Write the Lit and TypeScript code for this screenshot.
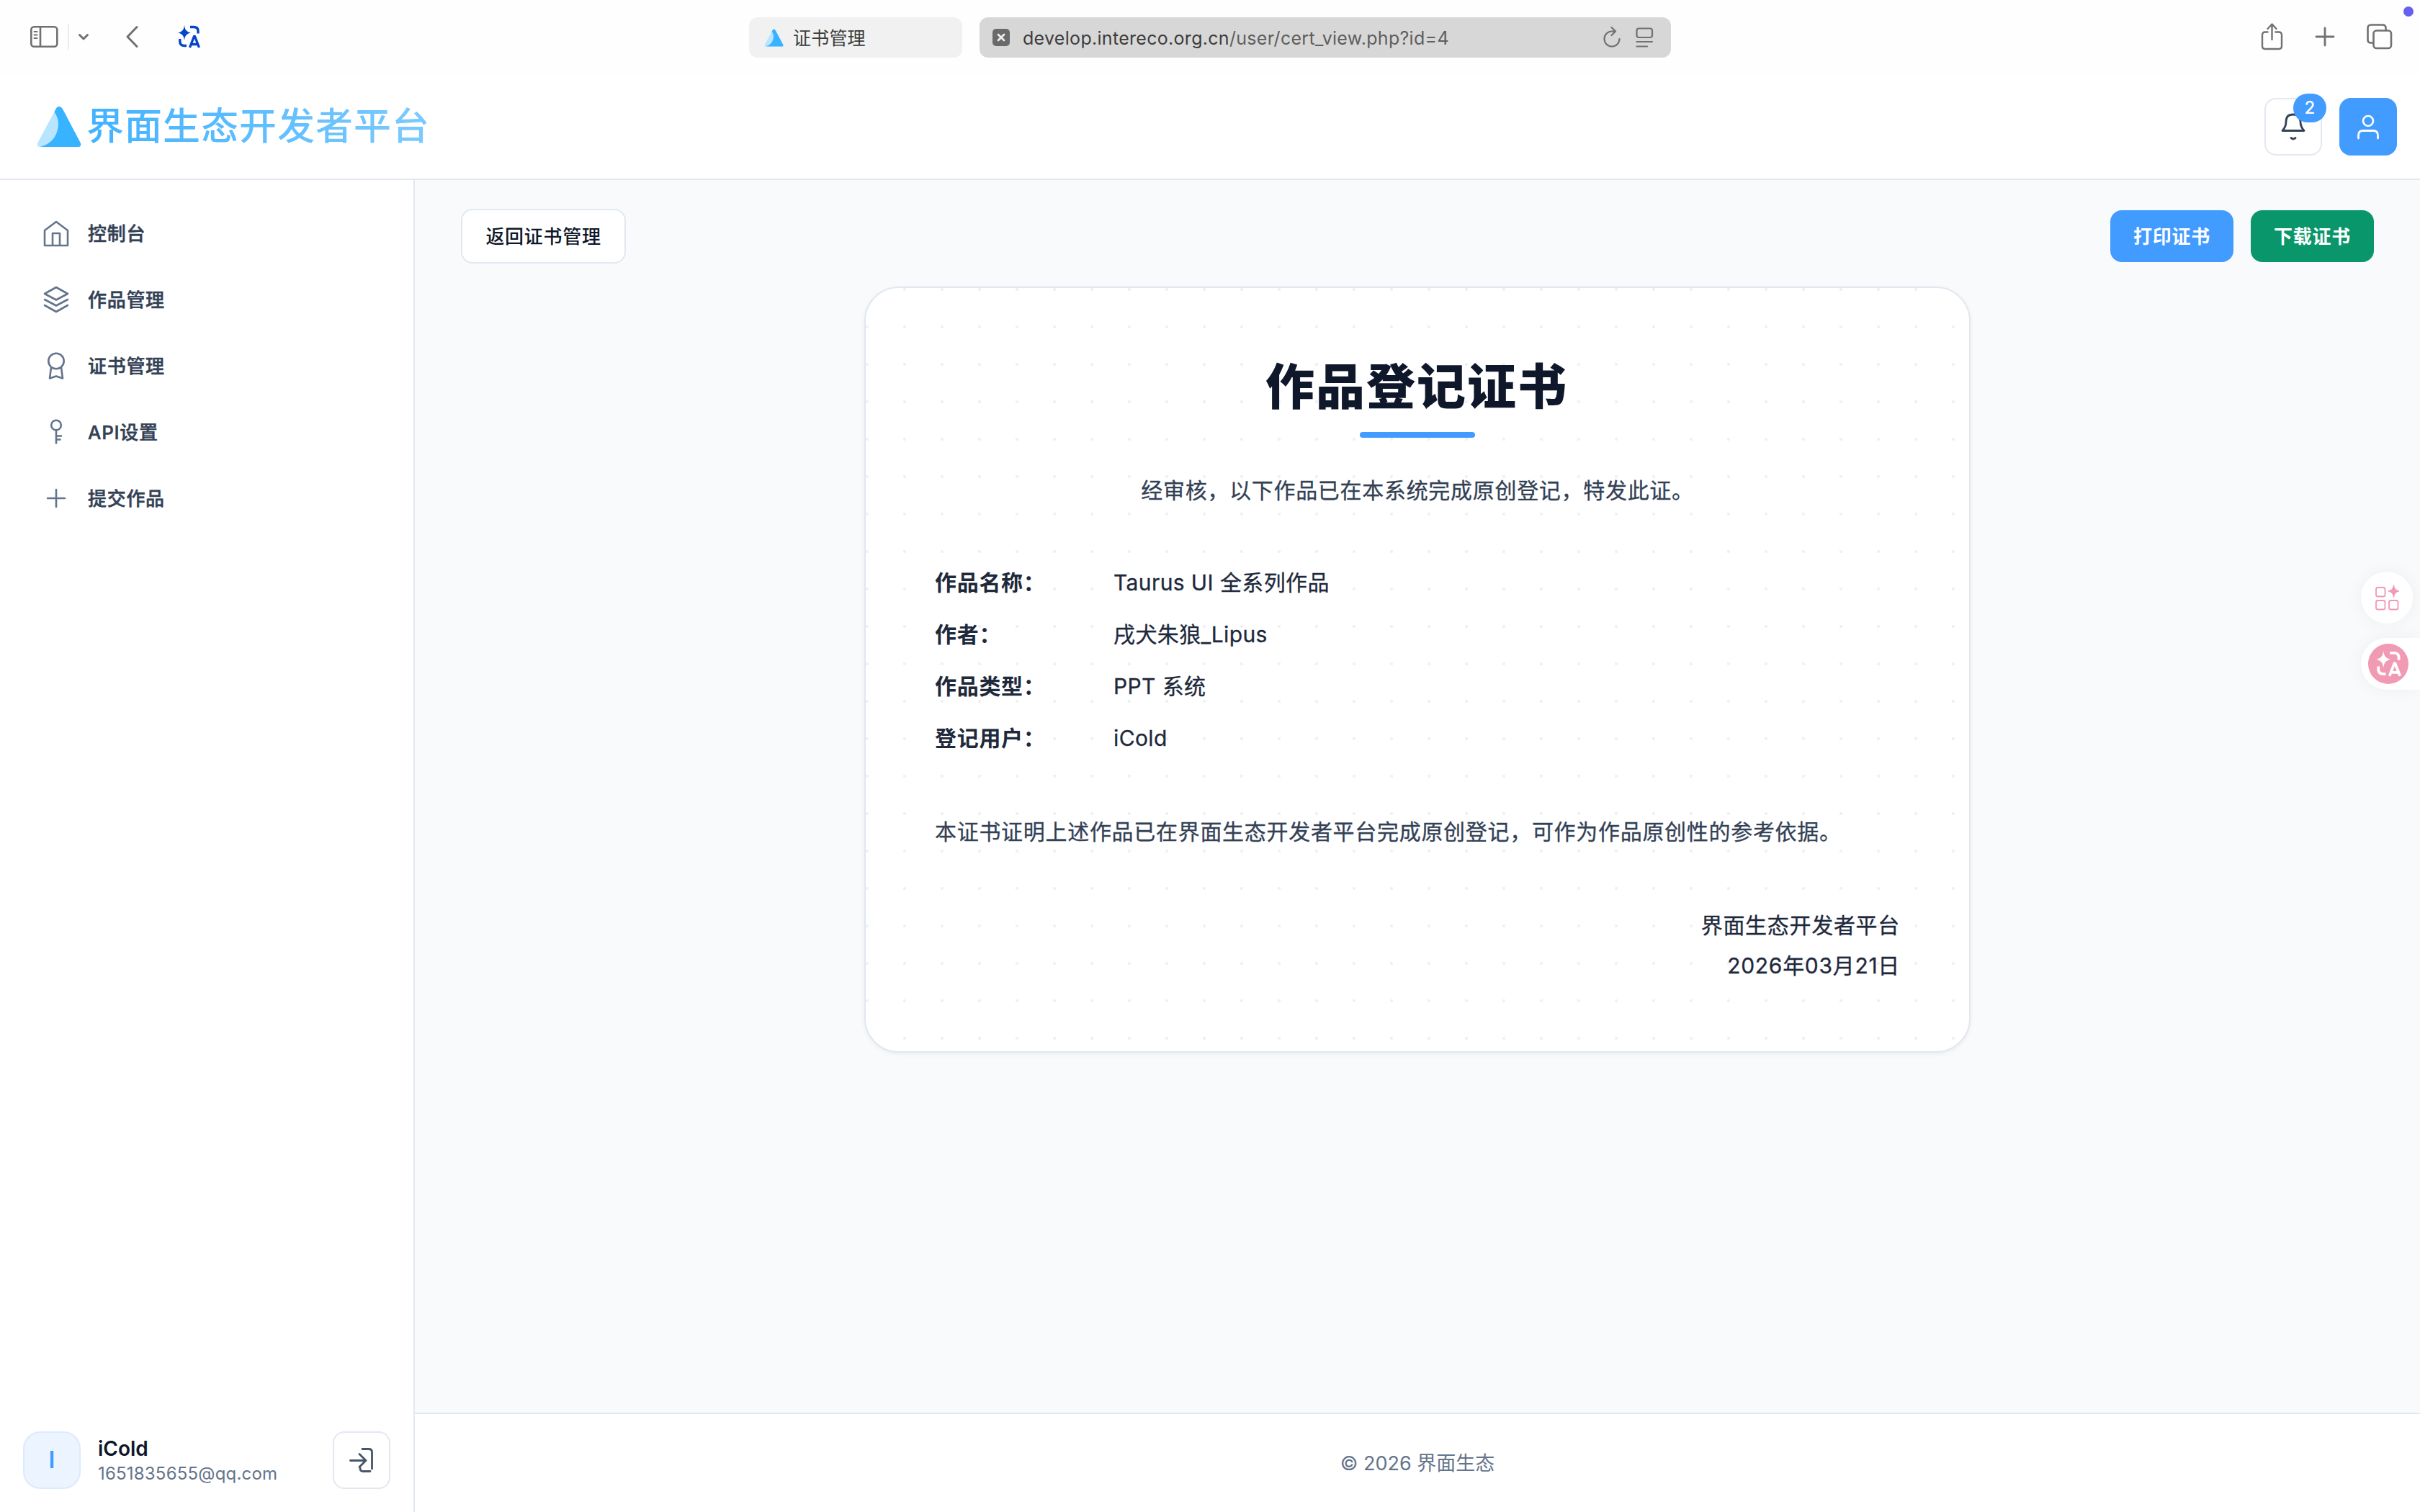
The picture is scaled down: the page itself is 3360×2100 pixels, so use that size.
import { LitElement, html, css, svg } from "lit";
import { customElement } from "lit/decorators.js";

const icon = (cls: string, w: number, h: number, body: unknown) =>
  html`<svg class=${cls} width=${w} height=${h} viewBox="0 0 ${w} ${h}" fill="none" stroke="currentColor" stroke-width="2.6" stroke-linecap="round" stroke-linejoin="round">${body}</svg>`;

const translateGlyph = svg`
  <path d="M9 0 C10 7 12 9 18 10.5 C12 12 10 14 9 21 C8 14 6 12 0 10.5 C6 9 8 7 9 0Z" fill="currentColor" stroke="none"/>
  <path d="M17 2.5 H22 Q28 2.5 28 8 V11.500" stroke-width="3.4" stroke-linecap="butt"/>
  <path d="M2.800 19 V22.500 Q2.800 28.500 9 28.500 H12" stroke-width="3.4" stroke-linecap="butt"/>
  <path d="M16.500 31 L22.500 15.500 H23.500 L29.500 31 M18.500 26.500 H27.500" stroke-width="3.4" stroke-linecap="butt"/>`;

const mark = (w: number, h: number) => html`<svg class="mark" width=${w} height=${h} viewBox="0 0 62 58">
  <path d="M31 1 Q28 1 26.500 4.500 L1.500 51 Q-1 57 5 57 H57 Q63 57 60.500 51 L36 4.500 Q34 1 31 1Z" fill="#b8e5ff"/>
  <path d="M31 1 Q28 1 26.500 4.500 L24.500 8.500 Q31 18 30 28 Q27 51 5 57 H57 Q63 57 60.500 51 L36 4.500 Q34 1 31 1Z" fill="#38b3ff"/>
</svg>`;

const navItems = [
  { label: "控制台", art: svg`<path d="M2 15 L18 3 L34 15 V36 H2Z M13 36 V19 H23 V36"/>` },
  { label: "作品管理", art: svg`<path d="M18 2 L34 11 L18 19.500 L2 11Z M2 19 L18 27.500 L34 19 M2 27 L18 36 L34 27"/>` },
  { label: "证书管理", art: svg`<circle cx="18" cy="12.500" r="10.700"/><path d="M11 21.500 L9 36.500 L18 33.500 L27 36.500 L25 21.500"/>` },
  { label: "API设置", art: svg`<circle cx="18" cy="9.500" r="6.800"/><path d="M18 16.500 V34.500 M18 24.500 H25 M18 29.500 H23.500"/>` },
  { label: "提交作品", art: svg`<path d="M18 7 V31 M6 19 H30"/>` },
];

const fields = [
  ["作品名称：", "Taurus UI 全系列作品"],
  ["作者：", "戌犬朱狼_Lipus"],
  ["作品类型：", "PPT 系统"],
  ["登记用户：", "iCold"],
];

@customElement("browser-bar")
export class BrowserBar extends LitElement {
  static styles = css`
    :host { display: grid; grid-template-columns: 1fr auto 1fr; align-items: center; box-sizing: border-box; height: 104px; padding: 0 37px 2px 40px; background: #fefefe; color: #717171; }
    svg { display: block; flex: none; }
    .side { display: flex; align-items: center; }
    .rule { width: 2px; height: 36px; background: #ececec; margin: 0 12px; }
    .back { margin-left: 50px; }
    .translate { color: #0645c9; margin-left: 55px; }
    .center { display: flex; gap: 24px; padding: 2px 3px 0 0; }
    .tab { display: flex; align-items: center; box-sizing: border-box; width: 296px; height: 56px; border-radius: 12px; background: #f1f1f1; color: #3c3c3c; padding-left: 20px; gap: 12px; font-size: 25px; letter-spacing: 0.2px; }
    .tab span { padding-top: 2px; }
    .url { display: flex; align-items: center; box-sizing: border-box; width: 960px; height: 56px; border-radius: 12px; background: #d7d7d7; padding: 0 24px 0 18px; }
    .site { background: #6a6a6a; border-radius: 5px; color: #ededed; }
    .address { flex: 1; margin-left: 18px; padding-top: 2px; font-size: 25px; color: #5e5e5e; letter-spacing: 0.3px; }
    .host { color: #3c3c3c; }
    .reader { margin-left: 19px; }
    .right { justify-content: flex-end; }
    .plus { margin-left: 44px; }
    .tabs { margin-left: 43px; }
  `;
  render() {
    return html`
      <div class="side">
        ${icon("panel", 42, 34, svg`<rect x="3.300" y="3.300" width="36" height="27.500" rx="4"/><path d="M16 3.500 V30.500"/><path d="M7.500 10 H11.500 M7.500 14.500 H11.500 M7.500 19 H11.500" stroke-width="2"/>`)}
        <span class="rule"></span>
        ${icon("caret", 16, 12, svg`<path d="M2.500 3.500 L8 9 L13.500 3.500" stroke-width="3"/>`)}
        ${icon("back", 18, 32, svg`<path d="M16 2.500 L3 16 L16 29.500" stroke-width="3"/>`)}
        ${icon("translate", 31, 32, translateGlyph)}
      </div>
      <div class="center">
        <div class="tab">${mark(29, 25)}<span>证书管理</span></div>
        <div class="url">
          ${icon("site", 24, 24, svg`<path d="M8 8 L16 16 M16 8 L8 16" stroke-width="2.800"/>`)}
          <span class="address"><span class="host">develop.intereco.org.cn</span>/user/cert_view.php?id=4</span>
          ${icon("reload", 26, 30, svg`<path d="M17.500 6.500 H13 A10.500 10.500 0 1 0 23.500 17 M12.500 1 L18 6.500 L12.500 12" stroke-width="2.200"/>`)}
          ${icon("reader", 26, 30, svg`<rect x="2.500" y="2.500" width="21.500" height="12.500" rx="3" stroke-width="2.200"/><path d="M2.500 21 H24 M2.500 27.500 H17" stroke-width="2.200"/>`)}
        </div>
      </div>
      <div class="side right">
        ${icon("share", 32, 40, svg`<path d="M10.500 13.500 H7 Q3 13.500 3 17.500 V33 Q3 37 7 37 H26 Q30 37 30 33 V17.500 Q30 13.500 26 13.500 H21.500 M16.500 24 V3 M10.500 9 L16.500 2.500 L22.500 9" stroke-width="2.400"/>`)}
        ${icon("plus", 28, 28, svg`<path d="M14 2 V26 M2 14 H26" stroke-width="2.800"/>`)}
        ${icon("tabs", 38, 38, svg`<rect x="10.500" y="10.500" width="24.500" height="24.500" rx="4"/><path d="M10 27.500 H7 Q2.500 27.500 2.500 23.500 V7 Q2.500 2.500 7 2.500 H23 Q27.500 2.500 27.500 7 V10"/>`)}
      </div>`;
  }
}

@customElement("site-header")
export class SiteHeader extends LitElement {
  static styles = css`
    :host { display: flex; align-items: center; justify-content: space-between; box-sizing: border-box; height: 146px; padding: 0 32px 0 50px; border-bottom: 2px solid #e2e8f0; background: #fff; }
    svg { display: block; }
    .brand { display: flex; align-items: center; gap: 6px; }
    .name { font-size: 52px; line-height: 64px; letter-spacing: 1px; font-weight: 500; background: linear-gradient(90deg, #42b2ff, #7ccafe); background-clip: text; -webkit-background-clip: text; color: transparent; }
    .actions { display: flex; gap: 24px; }
    .btn { position: relative; display: grid; place-items: center; box-sizing: border-box; width: 80px; height: 80px; border-radius: 16px; border: 2px solid #e2e8f0; color: #334155; }
    .user { background: #429bff; border-color: #429bff; color: #fff; }
    .badge { position: absolute; right: -8px; top: -8px; width: 46px; height: 40px; border-radius: 20px; background: #429bff; color: #fff; display: grid; place-items: center; font-size: 24px; font-weight: 500; }
  `;
  render() {
    return html`
      <div class="brand">${mark(64, 58)}<span class="name">界面生态开发者平台</span></div>
      <div class="actions">
        <div class="btn">
          ${icon("bell", 36, 40, svg`<path d="M3 25.500 Q8 20 8 13 Q8 3 18 3 Q28 3 28 13 Q28 20 33 25.500 Z M15 35.500 Q18 38.500 21 35.500" stroke-width="2.800"/>`)}
          <span class="badge">2</span>
        </div>
        <div class="btn user">
          ${icon("person", 36, 40, svg`<circle cx="18" cy="12" r="7"/><path d="M4.500 36 V32 Q4.500 25.500 11 25.500 H25 Q31.500 25.500 31.500 32 V36" stroke-width="2.800"/>`)}
        </div>
      </div>`;
  }
}

@customElement("side-nav")
export class SideNav extends LitElement {
  static styles = css`
    :host { display: flex; flex-direction: column; justify-content: space-between; box-sizing: border-box; width: 576px; padding: 32px; border-right: 2px solid #e2e8f0; background: #fff; }
    svg { display: block; }
    .list { display: flex; flex-direction: column; gap: 8px; }
    .item { display: flex; align-items: center; gap: 26px; height: 84px; padding-left: 28px; font-size: 26px; letter-spacing: 0.7px; font-weight: 500; color: #334155; }
    .item span { padding-top: 3px; -webkit-text-stroke: 0.5px currentColor; }
    .item svg { color: #64748b; }
    .account { display: flex; align-items: center; }
    .avatar { box-sizing: border-box; width: 80px; height: 80px; border-radius: 24px; border: 2px solid #dceafc; background: #ecf4ff; color: #429bff; display: grid; place-items: center; font-size: 32px; font-weight: 600; }
    .who { flex: 1; margin-left: 24px; padding-top: 2px; display: flex; flex-direction: column; }
    .nick { font-size: 28px; line-height: 36px; font-weight: 600; color: #0f172a; }
    .mail { font-size: 24px; line-height: 34px; letter-spacing: 0.2px; color: #64748b; }
    .exit { box-sizing: border-box; width: 80px; height: 80px; border-radius: 16px; border: 2px solid #e2e8f0; display: grid; place-items: center; color: #475569; }
  `;
  render() {
    return html`
      <div class="list">
        ${navItems.map((n) => html`<div class="item">${icon("", 36, 38, n.art)}<span>${n.label}</span></div>`)}
      </div>
      <div class="account">
        <div class="avatar">I</div>
        <div class="who"><span class="nick">iCold</span><span class="mail">1651835655@qq.com</span></div>
        <div class="exit">${icon("", 36, 36, svg`<path d="M19 2.500 H28 Q32.500 2.500 32.500 7 V30 M30 33.500 H20 Q16 33.500 16 29 M2.500 18.500 H24 M15 9.500 L24 18.500 L15 27.500" stroke-width="2.800"/>`)}</div>
      </div>`;
  }
}

@customElement("certificate-card")
export class CertificateCard extends LitElement {
  static styles = css`
    :host { display: flex; flex-direction: column; box-sizing: border-box; width: 1536px; height: 1064px; padding: 96px 96px 80px; border: 2px solid #e2e8f0; border-radius: 48px; background: radial-gradient(circle at 2px 2px, #eff1f3 2px, transparent 2.4px) 0 0 / 52px 52px #fff; box-shadow: 0 2px 6px rgba(15, 23, 42, 0.06); color: #1e293b; font-size: 30px; letter-spacing: 0.7px; }
    .title { font-size: 68px; line-height: 82px; font-weight: 900; letter-spacing: 2px; text-align: center; color: #0f172a; padding-right: 2px; }
    .bar { flex: none; align-self: center; width: 160px; height: 8px; border-radius: 4px; background: #429bff; margin-top: 22px; }
    .lead, .value, .note, .sign { -webkit-text-stroke: 0.3px currentColor; }
    .lead { margin-top: 45px; line-height: 56px; text-align: center; color: #334155; }
    .fields { display: grid; grid-template-columns: 248px 1fr; row-gap: 16px; margin-top: 72px; line-height: 56px; }
    .key { font-weight: 700; }
    .value { letter-spacing: 0.4px; }
    .note { margin-top: 74px; line-height: 56px; color: #334155; }
    .sign { margin-top: 74px; line-height: 56px; text-align: right; }
  `;
  render() {
    return html`
      <div class="title">作品登记证书</div>
      <div class="bar"></div>
      <div class="lead">经审核，以下作品已在本系统完成原创登记，特发此证。</div>
      <div class="fields">
        ${fields.map(([k, v]) => html`<span class="key">${k}</span><span class="value">${v}</span>`)}
      </div>
      <div class="note">本证书证明上述作品已在界面生态开发者平台完成原创登记，可作为作品原创性的参考依据。</div>
      <div class="sign"><div>界面生态开发者平台</div><div>2026年03月21日</div></div>`;
  }
}

@customElement("app-root")
export class AppRoot extends LitElement {
  static styles = css`
    :host { display: flex; flex-direction: column; position: relative; width: 3360px; height: 2100px; overflow: hidden; background: #fff; font-family: Inter, "Noto Sans CJK SC", sans-serif; line-height: 1.4; }
    svg { display: block; }
    .body { display: flex; flex: 1; min-height: 0; }
    .main { flex: 1; display: flex; flex-direction: column; background: #f8fafc; }
    .content { flex: 1; display: flex; flex-direction: column; padding: 40px 64px 0; }
    .tools { display: flex; align-items: center; height: 76px; gap: 24px; margin-bottom: 32px; font-size: 26px; letter-spacing: 0.7px; font-weight: 600; }
    .btn { display: grid; place-items: center; box-sizing: border-box; border-radius: 16px; color: #fff; width: 171px; height: 72px; padding-top: 2px; }
    .return { width: 229px; height: 76px; margin-right: auto; border: 2px solid #e2e8f0; background: #fff; color: #0f172a; font-weight: 500; }
    .print { background: #429bff; }
    .download { background: #08966a; }
    certificate-card { align-self: center; }
    .footer { box-sizing: border-box; height: 138px; padding-top: 2px; border-top: 2px solid #e2e8f0; background: #fff; display: grid; place-items: center; font-size: 27px; color: #64748b; }
    .dot { position: absolute; left: 3337px; top: 9px; width: 14px; height: 14px; border-radius: 50%; background: #6560ef; }
    .float { position: absolute; box-sizing: border-box; left: 3278px; height: 72px; background: #fff; box-shadow: 0 0 24px rgba(15, 23, 42, 0.05); color: #f09ab4; display: grid; place-items: center; }
    .apps { top: 794px; width: 72px; border-radius: 36px; }
    .trans { top: 886px; width: 82px; border-radius: 36px 0 0 36px; justify-content: start; padding-left: 10px; }
    .disc { width: 56px; height: 56px; border-radius: 50%; background: #f09ab4; color: #fff; display: grid; place-items: center; }
    .disc svg { width: 35px; height: 36px; }
  `;
  render() {
    return html`
      <browser-bar></browser-bar>
      <site-header></site-header>
      <div class="body">
        <side-nav></side-nav>
        <div class="main">
          <div class="content">
            <div class="tools">
              <div class="btn return">返回证书管理</div>
              <div class="btn print">打印证书</div>
              <div class="btn download">下载证书</div>
            </div>
            <certificate-card></certificate-card>
          </div>
          <div class="footer">© 2026 界面生态</div>
        </div>
      </div>
      <span class="dot"></span>
      <div class="float apps">${icon("", 34, 36, svg`<g stroke-width="1.800"><rect x="2" y="4" width="12.500" height="12.500" rx="2.500"/><rect x="2" y="22" width="12.500" height="12.500" rx="2.500"/><rect x="20" y="22" width="12.500" height="12.500" rx="2.500"/></g><path d="M26.500 1 Q27.500 8 34 9 Q27.500 10 26.500 17.500 Q25.500 10 19 9 Q25.500 8 26.500 1Z" fill="currentColor" stroke="currentColor" stroke-width="1"/>`)}</div>
      <div class="float trans"><div class="disc">${icon("", 31, 32, translateGlyph)}</div></div>`;
  }
}
